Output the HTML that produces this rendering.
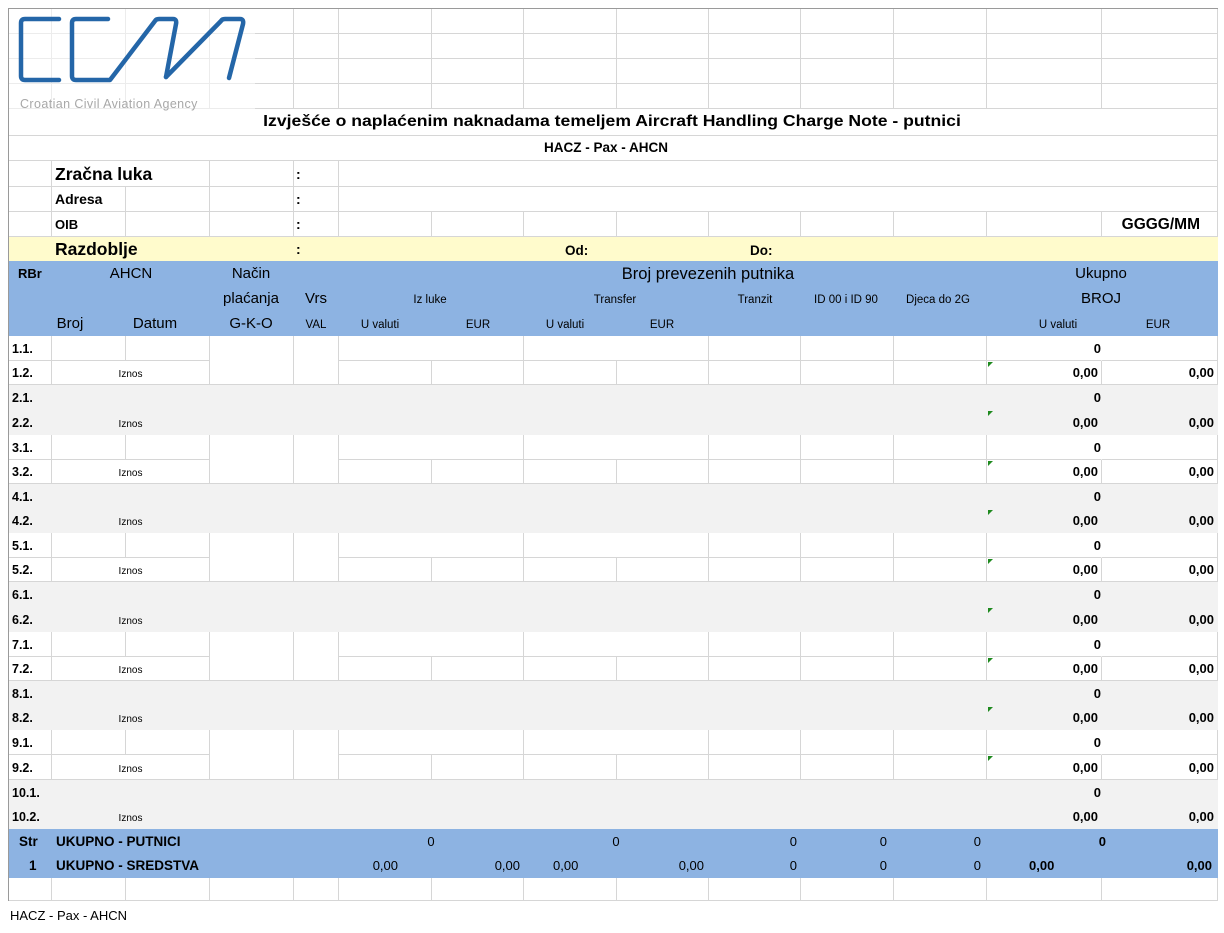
<!DOCTYPE html>
<html><head><meta charset="utf-8"><style>
*{margin:0;padding:0;box-sizing:border-box}
body{width:1224px;height:933px;background:#fff;position:relative;overflow:hidden;font-family:"Liberation Sans",Arial,sans-serif;color:#000}
table{position:absolute;left:8px;top:8px;border-collapse:separate;border-spacing:0;table-layout:fixed;width:1209px;border-left:1px solid #9a9a9a;border-top:1px solid #9a9a9a}
td{border-right:1px solid #d6d6d6;border-bottom:1px solid #d6d6d6;padding:0;font-size:13px;line-height:14px;white-space:nowrap;overflow:visible;vertical-align:bottom;position:relative}
tr.ra td{height:25px}
tr.rc td{height:24.3px}
.n{border-right-color:#fff}
.g{background:#f2f2f2;border-color:#f2f2f2}
.b{background:#8db3e2;border-color:#8db3e2}
.y{background:#fffbcc;border-color:#fffbcc}
.l{font-weight:bold;padding:0 0 4px 3px;font-size:12.5px}
.iz{font-size:10px;text-align:center;padding-bottom:2px}
.v{font-weight:bold;text-align:right;padding:0 3px 4px 0}
.v.n{padding-right:0}
.g.n{border-right-color:#f2f2f2}
.tri::before{content:"";position:absolute;left:1px;top:1px;border-top:5px solid #1f8a1f;border-right:5px solid transparent}
.t{position:absolute;white-space:nowrap;font-size:13px;line-height:15px}
.bd{font-weight:bold}
.cx{transform:translateX(-50%)}
.s{font-size:11.5px}
.h{font-size:15px;line-height:16px}
</style></head><body>
<table>
<colgroup><col style="width:43px"><col style="width:74px"><col style="width:84px"><col style="width:84px"><col style="width:45px"><col style="width:93px"><col style="width:92px"><col style="width:93px"><col style="width:92px"><col style="width:92px"><col style="width:93px"><col style="width:93px"><col style="width:115px"><col style="width:116px"></colgroup>
<tr style="height:25px"><td></td><td></td><td></td><td></td><td></td><td></td><td></td><td></td><td></td><td></td><td></td><td></td><td></td><td></td></tr>
<tr style="height:25px"><td></td><td></td><td></td><td></td><td></td><td></td><td></td><td></td><td></td><td></td><td></td><td></td><td></td><td></td></tr>
<tr style="height:25px"><td></td><td></td><td></td><td></td><td></td><td></td><td></td><td></td><td></td><td></td><td></td><td></td><td></td><td></td></tr>
<tr style="height:25px"><td></td><td></td><td></td><td></td><td></td><td></td><td></td><td></td><td></td><td></td><td></td><td></td><td></td><td></td></tr>
<tr style="height:27px"><td colspan="14"></td></tr>
<tr style="height:25px"><td colspan="14"></td></tr>
<tr style="height:26px"><td></td><td colspan="2"></td><td></td><td></td><td colspan="9"></td></tr>
<tr style="height:25px"><td></td><td></td><td></td><td></td><td></td><td colspan="9"></td></tr>
<tr style="height:25px"><td></td><td></td><td></td><td></td><td></td><td></td><td></td><td></td><td></td><td></td><td></td><td></td><td></td><td></td></tr>
<tr style="height:24px"><td colspan="14" class="y"></td></tr>
<tr style="height:75px"><td colspan="14" class="b"></td></tr>

<tr class="ra"><td class="l">1.1.</td><td></td><td></td><td rowspan="2"></td><td rowspan="2"></td><td colspan="2"></td><td colspan="2"></td><td></td><td></td><td></td><td class="v n">0</td><td></td></tr>
<tr class="rc"><td class="l">1.2.</td><td colspan="2" class="iz">Iznos</td><td></td><td></td><td></td><td></td><td></td><td></td><td></td><td class="v tri">0,00</td><td class="v">0,00</td></tr>
<tr class="ra"><td class="l g">2.1.</td><td class="g"></td><td class="g"></td><td class="g"></td><td class="g"></td><td class="g"></td><td class="g"></td><td class="g"></td><td class="g"></td><td class="g"></td><td class="g"></td><td class="g"></td><td class="v n g">0</td><td class="g"></td></tr>
<tr class="rc"><td class="l g">2.2.</td><td colspan="2" class="iz g">Iznos</td><td class="g"></td><td class="g"></td><td class="g"></td><td class="g"></td><td class="g"></td><td class="g"></td><td class="g"></td><td class="g"></td><td class="g"></td><td class="v g tri">0,00</td><td class="v g">0,00</td></tr>

<tr class="ra"><td class="l">3.1.</td><td></td><td></td><td rowspan="2"></td><td rowspan="2"></td><td colspan="2"></td><td colspan="2"></td><td></td><td></td><td></td><td class="v n">0</td><td></td></tr>
<tr class="rc"><td class="l">3.2.</td><td colspan="2" class="iz">Iznos</td><td></td><td></td><td></td><td></td><td></td><td></td><td></td><td class="v tri">0,00</td><td class="v">0,00</td></tr>
<tr class="ra"><td class="l g">4.1.</td><td class="g"></td><td class="g"></td><td class="g"></td><td class="g"></td><td class="g"></td><td class="g"></td><td class="g"></td><td class="g"></td><td class="g"></td><td class="g"></td><td class="g"></td><td class="v n g">0</td><td class="g"></td></tr>
<tr class="rc"><td class="l g">4.2.</td><td colspan="2" class="iz g">Iznos</td><td class="g"></td><td class="g"></td><td class="g"></td><td class="g"></td><td class="g"></td><td class="g"></td><td class="g"></td><td class="g"></td><td class="g"></td><td class="v g tri">0,00</td><td class="v g">0,00</td></tr>

<tr class="ra"><td class="l">5.1.</td><td></td><td></td><td rowspan="2"></td><td rowspan="2"></td><td colspan="2"></td><td colspan="2"></td><td></td><td></td><td></td><td class="v n">0</td><td></td></tr>
<tr class="rc"><td class="l">5.2.</td><td colspan="2" class="iz">Iznos</td><td></td><td></td><td></td><td></td><td></td><td></td><td></td><td class="v tri">0,00</td><td class="v">0,00</td></tr>
<tr class="ra"><td class="l g">6.1.</td><td class="g"></td><td class="g"></td><td class="g"></td><td class="g"></td><td class="g"></td><td class="g"></td><td class="g"></td><td class="g"></td><td class="g"></td><td class="g"></td><td class="g"></td><td class="v n g">0</td><td class="g"></td></tr>
<tr class="rc"><td class="l g">6.2.</td><td colspan="2" class="iz g">Iznos</td><td class="g"></td><td class="g"></td><td class="g"></td><td class="g"></td><td class="g"></td><td class="g"></td><td class="g"></td><td class="g"></td><td class="g"></td><td class="v g tri">0,00</td><td class="v g">0,00</td></tr>

<tr class="ra"><td class="l">7.1.</td><td></td><td></td><td rowspan="2"></td><td rowspan="2"></td><td colspan="2"></td><td colspan="2"></td><td></td><td></td><td></td><td class="v n">0</td><td></td></tr>
<tr class="rc"><td class="l">7.2.</td><td colspan="2" class="iz">Iznos</td><td></td><td></td><td></td><td></td><td></td><td></td><td></td><td class="v tri">0,00</td><td class="v">0,00</td></tr>
<tr class="ra"><td class="l g">8.1.</td><td class="g"></td><td class="g"></td><td class="g"></td><td class="g"></td><td class="g"></td><td class="g"></td><td class="g"></td><td class="g"></td><td class="g"></td><td class="g"></td><td class="g"></td><td class="v n g">0</td><td class="g"></td></tr>
<tr class="rc"><td class="l g">8.2.</td><td colspan="2" class="iz g">Iznos</td><td class="g"></td><td class="g"></td><td class="g"></td><td class="g"></td><td class="g"></td><td class="g"></td><td class="g"></td><td class="g"></td><td class="g"></td><td class="v g tri">0,00</td><td class="v g">0,00</td></tr>

<tr class="ra"><td class="l">9.1.</td><td></td><td></td><td rowspan="2"></td><td rowspan="2"></td><td colspan="2"></td><td colspan="2"></td><td></td><td></td><td></td><td class="v n">0</td><td></td></tr>
<tr class="rc"><td class="l">9.2.</td><td colspan="2" class="iz">Iznos</td><td></td><td></td><td></td><td></td><td></td><td></td><td></td><td class="v tri">0,00</td><td class="v">0,00</td></tr>
<tr class="ra"><td class="l g">10.1.</td><td class="g"></td><td class="g"></td><td class="g"></td><td class="g"></td><td class="g"></td><td class="g"></td><td class="g"></td><td class="g"></td><td class="g"></td><td class="g"></td><td class="g"></td><td class="v n g">0</td><td class="g"></td></tr>
<tr class="rc"><td class="l g">10.2.</td><td colspan="2" class="iz g">Iznos</td><td class="g"></td><td class="g"></td><td class="g"></td><td class="g"></td><td class="g"></td><td class="g"></td><td class="g"></td><td class="g"></td><td class="g"></td><td class="v g">0,00</td><td class="v g">0,00</td></tr>

<tr style="height:49px"><td colspan="14" class="b"></td></tr>
<tr style="height:23px"><td></td><td></td><td></td><td></td><td></td><td></td><td></td><td></td><td></td><td></td><td></td><td></td><td></td><td></td></tr>
</table>

<svg style="position:absolute;left:8px;top:8px" width="250" height="105" viewBox="8 8 250 105">
<rect x="9" y="9" width="246" height="104" fill="#fff" opacity="0.55"/>
<g fill="none" stroke="#2466a8" stroke-width="4.5" stroke-linejoin="round" stroke-linecap="round">
<path d="M59,19 H25 Q21,19 21,23 V76 Q21,80 25,80 H59"/>
<path d="M108,19 H76 Q72,19 72,23 V76 Q72,80 76,80 H110 L155,21 Q156,19 159,19 H173 Q177,19 176,24 L166,77"/>
<path d="M166,77 L221,21 Q222,19 225,19 H240 Q244,19 243,24 L229,78"/>
</g>
<text x="20" y="108" font-family="Liberation Sans, sans-serif" font-size="12.5" fill="#a8a8a8" letter-spacing="0.4">Croatian Civil Aviation Agency</text>
</svg>

<div class="t bd" style="left:612px;top:113px;font-size:16px;line-height:18px;transform:translateX(-50%) scaleX(1.1)">Izvješće o naplaćenim naknadama temeljem Aircraft Handling Charge Note - putnici</div>
<div class="t bd cx" style="left:606px;top:140px;font-size:13.5px">HACZ - Pax - AHCN</div>

<div class="t bd" style="left:55px;top:164px;font-size:17.5px;line-height:20px">Zračna luka</div>
<div class="t bd" style="left:296px;top:167px;font-size:14px">:</div>
<div class="t bd" style="left:55px;top:192px;font-size:14px">Adresa</div>
<div class="t bd" style="left:296px;top:192px;font-size:14px">:</div>
<div class="t bd" style="left:55px;top:217px;font-size:13px">OIB</div>
<div class="t bd" style="left:296px;top:217px;font-size:14px">:</div>
<div class="t bd" style="right:24px;top:216px;font-size:15.5px;line-height:17px">GGGG/MM</div>
<div class="t bd" style="left:55px;top:239px;font-size:17.5px;line-height:20px">Razdoblje</div>
<div class="t bd" style="left:296px;top:242px;font-size:14px">:</div>
<div class="t bd" style="left:565px;top:243px;font-size:13.5px">Od:</div>
<div class="t bd" style="left:750px;top:243px;font-size:13.5px">Do:</div>

<div class="t bd" style="left:18px;top:266px;font-size:13px">RBr</div>
<div class="t cx h" style="left:131px;top:266px">AHCN</div>
<div class="t cx h" style="left:251px;top:266px">Način</div>
<div class="t cx" style="left:708px;top:265px;font-size:16.5px;line-height:18px">Broj prevezenih putnika</div>
<div class="t cx h" style="left:1101px;top:266px">Ukupno</div>
<div class="t cx h" style="left:251px;top:291px">plaćanja</div>
<div class="t cx h" style="left:316px;top:291px">Vrs</div>
<div class="t cx s" style="left:430px;top:293px">Iz luke</div>
<div class="t cx s" style="left:615px;top:293px">Transfer</div>
<div class="t cx s" style="left:755px;top:293px">Tranzit</div>
<div class="t cx s" style="left:846px;top:293px">ID 00 i ID 90</div>
<div class="t cx s" style="left:938px;top:293px">Djeca do 2G</div>
<div class="t cx h" style="left:1101px;top:291px">BROJ</div>
<div class="t cx h" style="left:70px;top:316px">Broj</div>
<div class="t cx h" style="left:155px;top:316px">Datum</div>
<div class="t cx h" style="left:251px;top:316px">G-K-O</div>
<div class="t cx s" style="left:316px;top:318px">VAL</div>
<div class="t cx s" style="left:380px;top:318px">U valuti</div>
<div class="t cx s" style="left:478px;top:318px">EUR</div>
<div class="t cx s" style="left:565px;top:318px">U valuti</div>
<div class="t cx s" style="left:662px;top:318px">EUR</div>
<div class="t cx s" style="left:1058px;top:318px">U valuti</div>
<div class="t cx s" style="left:1158px;top:318px">EUR</div>

<div class="t bd" style="left:19px;top:834px;font-size:13.5px">Str</div>
<div class="t bd" style="left:56px;top:834px;font-size:13.5px">UKUPNO - PUTNICI</div>
<div class="t cx" style="left:431px;top:834px">0</div>
<div class="t cx" style="left:616px;top:834px">0</div>
<div class="t" style="right:427px;top:834px">0</div>
<div class="t" style="right:337px;top:834px">0</div>
<div class="t" style="right:243px;top:834px">0</div>
<div class="t bd" style="right:118px;top:834px">0</div>
<div class="t bd" style="left:29px;top:858px;font-size:13.5px">1</div>
<div class="t bd" style="left:56px;top:858px;font-size:13.5px">UKUPNO - SREDSTVA</div>
<div class="t" style="right:826px;top:858px">0,00</div>
<div class="t" style="right:704px;top:858px">0,00</div>
<div class="t" style="left:553px;top:858px">0,00</div>
<div class="t" style="right:520px;top:858px">0,00</div>
<div class="t" style="right:427px;top:858px">0</div>
<div class="t" style="right:337px;top:858px">0</div>
<div class="t" style="right:243px;top:858px">0</div>
<div class="t bd" style="left:1029px;top:858px">0,00</div>
<div class="t bd" style="right:12px;top:858px">0,00</div>

<div class="t" style="left:10px;top:908px;font-size:13px">HACZ - Pax - AHCN</div>
</body></html>
